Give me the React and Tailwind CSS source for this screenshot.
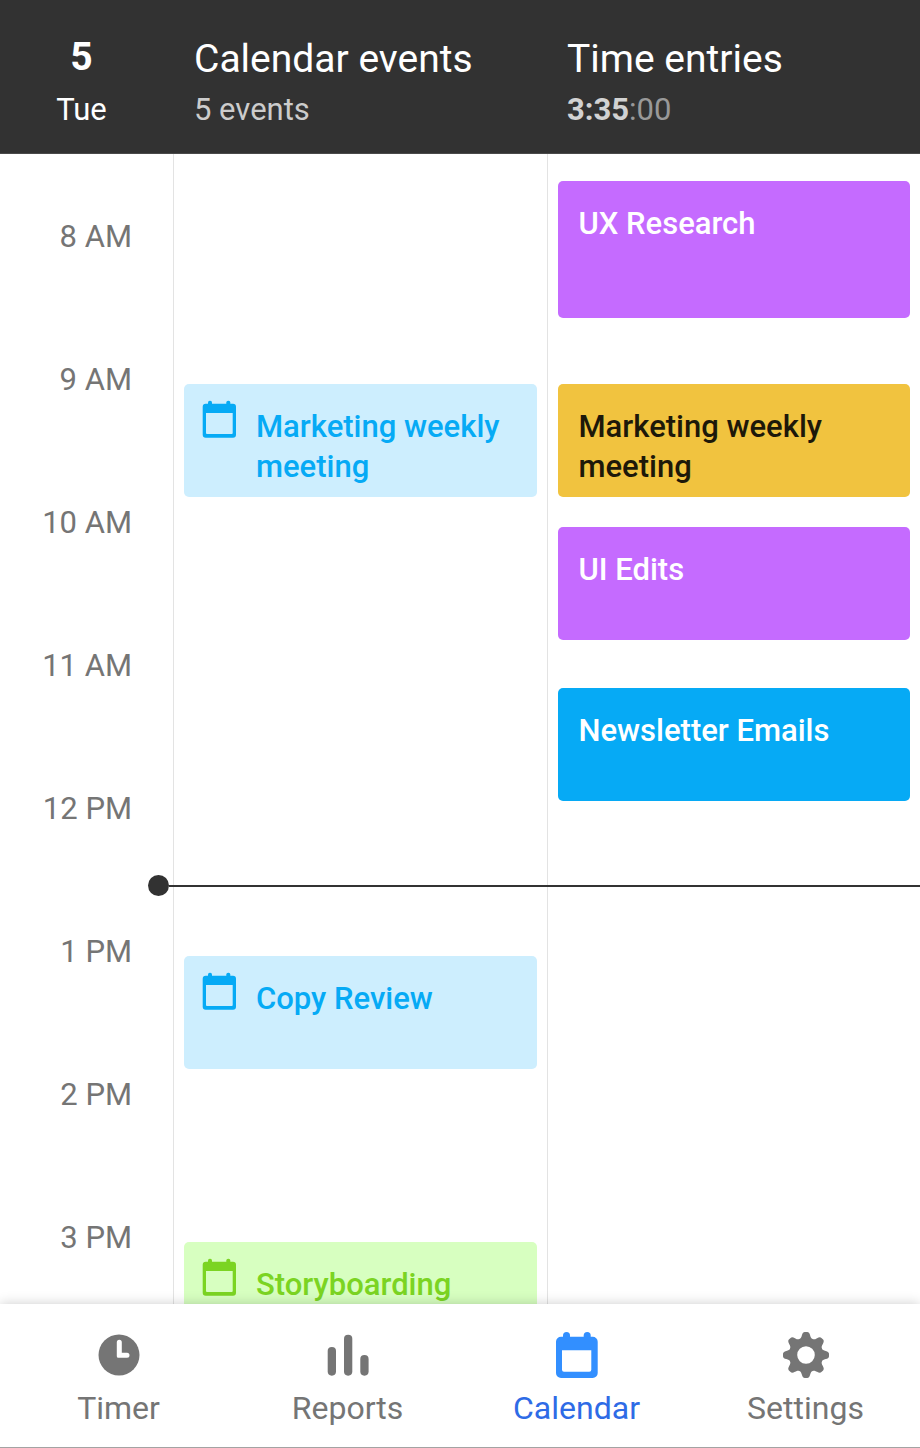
const hours = ['8 AM', '9 AM', '10 AM', '11 AM', '12 PM', '1 PM', '2 PM', '3 PM'];

const calendarEvents = [
  { title: 'Marketing weekly meeting', className: 'mt-[230px] h-[113px] bg-[#cdeefe] text-[#06aaf5]' },
  { title: 'Copy Review', className: 'mt-[459px] h-[113px] bg-[#cdeefe] text-[#06aaf5]' },
  { title: 'Storyboarding', className: 'mt-[173px] h-[113px] bg-[#d7ffc0] text-[#7bd422]' },
];

const timeEntries = [
  { title: 'UX Research', className: 'mt-[27px] h-[137px] bg-[#c56bff] text-white' },
  { title: 'Marketing weekly meeting', className: 'mt-[66px] h-[113px] bg-[#f1c33f] text-[#1d1809]' },
  { title: 'UI Edits', className: 'mt-[30px] h-[113px] bg-[#c56bff] text-white' },
  { title: 'Newsletter Emails', className: 'mt-[48px] h-[113px] bg-[#06aaf5] text-white' },
];

function EventIcon() {
  return (
    <svg viewBox="0 0 36 38" className="w-9 h-[38px] shrink-0" fill="currentColor" aria-hidden="true">
      <rect x="6" y="0.7" width="4" height="6" rx="1.8" />
      <rect x="24.3" y="0.7" width="4" height="6" rx="1.8" />
      <path
        fillRule="evenodd"
        d="M3.7 3.7H31a3 3 0 0 1 3 3v28a3 3 0 0 1-3 3H3.7a3 3 0 0 1-3-3v-28a3 3 0 0 1 3-3ZM4 13v20a1 1 0 0 0 1 1h24.7a1 1 0 0 0 1-1V13Z"
      />
    </svg>
  );
}

function TimerIcon() {
  return (
    <svg viewBox="0 0 46 46" className="size-[46px]" aria-hidden="true">
      <circle cx="23" cy="23" r="20.5" fill="currentColor" />
      <path
        d="M20.8 10.3a2.5 2.5 0 0 1 5 0V20.7H31a2.5 2.5 0 0 1 0 5H22.3a1.5 1.5 0 0 1-1.5-1.5Z"
        fill="white"
      />
    </svg>
  );
}

function ReportsIcon() {
  return (
    <svg viewBox="0 0 46 46" className="size-[46px]" fill="currentColor" aria-hidden="true">
      <rect x="2.7" y="15" width="8.3" height="28.7" rx="4.1" />
      <rect x="19" y="2.7" width="8.3" height="41" rx="4.1" />
      <rect x="35.3" y="23" width="8.3" height="20.7" rx="4.1" />
    </svg>
  );
}

function CalendarIcon() {
  return (
    <svg viewBox="0 0 46 46" className="size-[46px] text-[#328fff]" fill="currentColor" aria-hidden="true">
      <rect x="9" y="0" width="7" height="10" rx="3.5" />
      <rect x="29.7" y="0" width="7" height="10" rx="3.5" />
      <path
        fillRule="evenodd"
        d="M7 4.7h31.7a5 5 0 0 1 5 5V41a5 5 0 0 1-5 5H7a5 5 0 0 1-5-5V9.7a5 5 0 0 1 5-5ZM8 18.2v19.5a2 2 0 0 0 2 2h25.3a2 2 0 0 0 2-2V18.2Z"
      />
    </svg>
  );
}

function SettingsIcon() {
  return (
    <svg viewBox="-23 -23 46 46" className="size-[46px]" aria-hidden="true">
      <g fill="currentColor">
        {[0, 45, 90, 135, 180, 225, 270, 315].map((angle) => (
          <path
            key={angle}
            transform={`rotate(${angle})`}
            d="M-7.5 -12L-6.6 -15.9C-5.2 -16.4 -4.7 -17.6 -4.1 -19.7Q-3.2 -23 -1.2 -23H1.2Q3.2 -23 4.1 -19.7C4.7 -17.6 5.2 -16.4 6.6 -15.9L7.5 -12Z"
          />
        ))}
      </g>
      <circle r="12.8" fill="none" stroke="currentColor" strokeWidth="8" />
    </svg>
  );
}

const tabs = [
  { label: 'Timer', Icon: TimerIcon },
  { label: 'Reports', Icon: ReportsIcon },
  { label: 'Calendar', Icon: CalendarIcon, active: true },
  { label: 'Settings', Icon: SettingsIcon },
];

function Header() {
  return (
    <header className="grid grid-cols-[174px_1fr_1fr] shrink-0 h-[154px] pt-[33px] bg-[#323232] border-b border-[#4a4a4a] text-white">
      <div className="pr-[11px] text-center">
        <p className="text-[39px] leading-[48px] font-bold">5</p>
        <p className="mt-1 text-[31px] leading-[50px]">Tue</p>
      </div>
      <div className="pl-5">
        <h2 className="text-[39px] leading-[52px]">Calendar events</h2>
        <p className="text-[31px] leading-[50px] text-[#cccccc]">5 events</p>
      </div>
      <div className="pl-5">
        <h2 className="text-[39px] leading-[52px]">Time entries</h2>
        <p className="text-[31px] leading-[50px] text-[#999999]">
          <span className="font-bold text-[#d2d2d2]">3:35</span>:00
        </p>
      </div>
    </header>
  );
}

export default function App() {
  return (
    <div className="flex flex-col h-screen bg-white font-['Roboto',sans-serif]">
      <Header />

      <main className="flex-1 min-h-0 overflow-y-auto [scrollbar-width:none]">
        <div className="relative grid grid-cols-[173px_1fr_1fr]">
          <ol className="pt-3 pr-[41px] text-right text-[31px] text-[#757575]">
            {hours.map((hour) => (
              <li key={hour} className="flex items-center justify-end h-[143px]">{hour}</li>
            ))}
          </ol>

          <section aria-label="Calendar events" className="px-2.5 border-l border-[#e3e3e3]">
            {calendarEvents.map((event) => (
              <article key={event.title} className={`flex gap-[18px] pl-[18px] pr-4 pt-4 rounded-[5px] ${event.className}`}>
                <EventIcon />
                <h3 className="pt-[7px] text-[31px] leading-10 font-medium">{event.title}</h3>
              </article>
            ))}
          </section>

          <section aria-label="Time entries" className="px-2.5 border-l border-[#e3e3e3]">
            {timeEntries.map((entry) => (
              <article key={entry.title} className={`pl-[21px] pr-5 pt-[23px] rounded-[5px] ${entry.className}`}>
                <h3 className="text-[31px] leading-10 font-medium">{entry.title}</h3>
              </article>
            ))}
          </section>

          {/* current time marker */}
          <div className="absolute top-[721px] left-[148px] right-0 flex items-center">
            <span className="size-[21px] rounded-full bg-[#323232]" />
            <span className="flex-1 h-0.5 bg-[#323232]" />
          </div>
        </div>
      </main>

      <nav className="relative grid grid-cols-4 shrink-0 h-36 pl-1 bg-white border-b border-[#a3a3a3] shadow-[0_0_12px_rgba(0,0,0,0.2)]">
        {tabs.map(({ label, Icon, active }) => (
          <button
            key={label}
            type="button"
            aria-current={active ? 'page' : undefined}
            className={`flex flex-col items-center pt-7 text-[32px] leading-[60px] ${active ? 'text-[#2e6be6]' : 'text-[#757575]'}`}
          >
            <Icon />
            {label}
          </button>
        ))}
      </nav>
    </div>
  );
}
